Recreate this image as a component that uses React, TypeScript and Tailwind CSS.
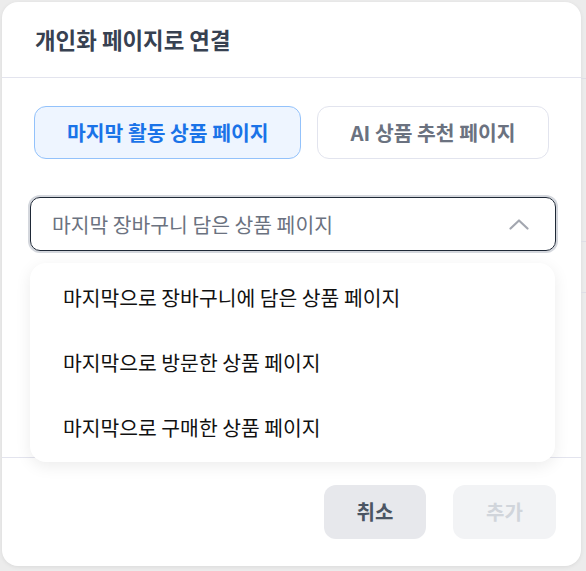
import { useState } from "react";

const options = [
    "마지막으로 장바구니에 담은 상품 페이지",
    "마지막으로 방문한 상품 페이지",
    "마지막으로 구매한 상품 페이지",
];

export default function App() {
    const [tab, setTab] = useState<"last" | "ai">("last");
    const [open, setOpen] = useState(true);

    return (
        <div
            className="flex h-[571px] w-[586px] bg-[#ececec] pt-[2px] pl-[2px]"
            style={{ fontFamily: '"Noto Sans CJK KR", "Noto Sans", sans-serif' }}
        >
            <div className="flex h-[564px] w-[579px] flex-col rounded-2xl bg-white shadow-[0_1px_4px_rgba(0,0,0,0.08)]">
                {/* header */}
                <div className="flex h-[76px] items-center border-b border-[#e3e4ee] px-[33px]">
                    <h1 className="text-[22.4px] font-semibold text-[#374151]">
                        개인화 페이지로 연결
                    </h1>
                </div>

                {/* body */}
                <div className="flex-1 pl-[28px] pr-[25px] pt-[28px]">
                    <div className="ml-[4px] flex gap-[16px]">
                        <button
                            onClick={() => setTab("last")}
                            className={
                                tab === "last"
                                    ? "h-[53px] rounded-xl border border-[#93c2fb] bg-[#eef5ff] px-[32px] text-[20.4px] font-bold text-[#1a73e8]"
                                    : "h-[53px] rounded-xl border border-[#e2e4ee] bg-white px-[32px] text-[20.4px] font-bold text-[#6b7280]"
                            }
                        >
                            마지막 활동 상품 페이지
                        </button>
                        <button
                            onClick={() => setTab("ai")}
                            className={
                                tab === "ai"
                                    ? "h-[53px] rounded-xl border border-[#93c2fb] bg-[#eef5ff] px-[32px] text-[20.4px] font-bold text-[#1a73e8]"
                                    : "h-[53px] rounded-xl border border-[#e2e4ee] bg-white px-[32px] text-[20.4px] font-bold text-[#6b7280]"
                            }
                        >
                            AI 상품 추천 페이지
                        </button>
                    </div>

                    <div className="relative mt-[38px]">
                        <button
                            onClick={() => setOpen(!open)}
                            className="flex h-[54px] w-full items-center justify-between rounded-[10px] border-[1.5px] border-[#1f2937] pl-[21px] pr-[26px] ring-2 ring-[#d4d7dd]"
                        >
                            <span className="text-[20.4px] text-[#6b7280]">
                                마지막 장바구니 담은 상품 페이지
                            </span>
                            <svg
                                width="20"
                                height="11"
                                viewBox="0 0 20 11"
                                fill="none"
                                stroke="#a3a7b0"
                                strokeWidth="2.2"
                                strokeLinecap="round"
                                strokeLinejoin="round"
                            >
                                <path d="M1.5 9.5 L10 1.5 L18.5 9.5" />
                            </svg>
                        </button>

                        {open && (
                            <ul className="absolute left-0 right-[1px] top-full z-10 mt-[12px] rounded-2xl bg-white py-[2px] shadow-[0_4px_16px_rgba(0,0,0,0.08)]">
                                {options.map((o) => (
                                    <li
                                        key={o}
                                        className="flex h-[65px] items-center px-[33px] text-[20.4px] text-[#111111]"
                                    >
                                        {o}
                                    </li>
                                ))}
                            </ul>
                        )}
                    </div>
                </div>

                {/* footer */}
                <div className="flex h-[109px] items-center justify-end gap-[27px] border-t border-[#e3e4ee] pr-[25px] pb-[1px]">
                    <button className="h-[54px] w-[102px] rounded-xl bg-[#e7e8ec] text-[20px] font-bold text-[#4b5563]">
                        취소
                    </button>
                    <button className="h-[54px] w-[103px] rounded-xl bg-[#f2f3f5] text-[20px] font-bold text-[#d1d5db]">
                        추가
                    </button>
                </div>
            </div>

            {/* sliver of the page behind the modal */}
            <div className="flex flex-1 flex-col">
                <div className="mt-[76px] border-t border-[#dedee6]" />
                <div className="mt-[162px] h-[52px] border-y border-[#dedee6]" />
            </div>
        </div>
    );
}
